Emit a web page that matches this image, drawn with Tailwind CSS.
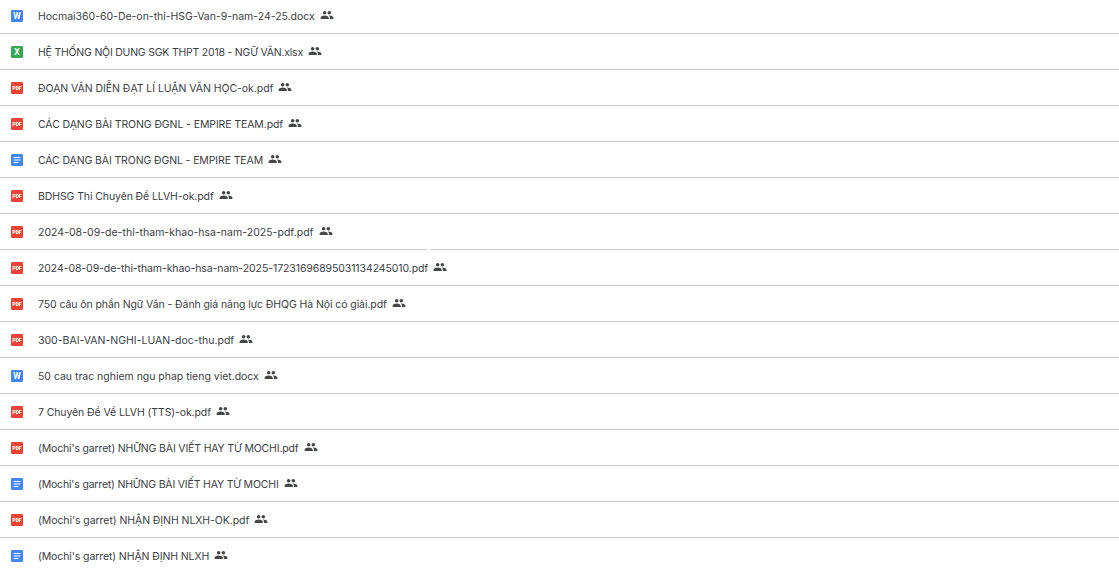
<!doctype html>
<html><head><meta charset="utf-8"><script src="https://cdn.jsdelivr.net/npm/@tailwindcss/browser@4"></script></head>
<body class="bg-white overflow-hidden">
<svg class="hidden"><defs>
<symbol id="w" viewBox="0 0 12 12"><rect width="12" height="12" rx="1.2" fill="#4285f4"/><text x="6" y="9.2" text-anchor="middle" font-size="8.5" font-weight="700" fill="#fff" font-family="Roboto">W</text></symbol>
<symbol id="x" viewBox="0 0 12 12"><rect width="12" height="12" rx="1.2" fill="#34a853"/><text x="6" y="9.2" text-anchor="middle" font-size="8.5" font-weight="700" fill="#fff" font-family="Roboto">X</text></symbol>
<symbol id="p" viewBox="0 0 12 12"><rect width="12" height="12" rx="1.2" fill="#ea4335"/><text x="6" y="7.8" text-anchor="middle" font-size="4.8" font-weight="900" fill="#fff" font-family="Roboto">PDF</text></symbol>
<symbol id="d" viewBox="0 0 12 12"><rect width="12" height="12" rx="1.2" fill="#4285f4"/><path d="M2.6 2.9h6.8v1.2H2.6zM2.6 5.4h6.8v1.2H2.6zM2.6 7.9h4.8v1.2H2.6z" fill="#fff"/></symbol>
<symbol id="s" viewBox="0 0 24 24"><path fill="#444746" d="M16 11c1.66 0 2.99-1.34 2.99-3S17.66 5 16 5s-3 1.34-3 3 1.34 3 3 3zm-8 0c1.66 0 2.99-1.34 2.99-3S9.66 5 8 5 5 6.34 5 8s1.34 3 3 3zm0 2c-2.33 0-7 1.17-7 3.5V19h14v-2.5C15 14.17 10.33 13 8 13zm8 0c-.29 0-.62.02-.97.05 1.16.84 1.97 1.97 1.97 3.45V19h6v-2.5c0-2.33-4.67-3.5-7-3.5z"/></symbol>
</defs></svg>
<main class="-mt-[2px] text-[10.5px] leading-4 text-[#3c4043] font-['Inter',sans-serif]">
<div class="h-9 border-b border-[#c4c7c5] flex items-center pl-[11px]"><svg class="size-3 mr-[15px]"><use href="#w"/></svg><span class="mt-[2px] tracking-[-0.02px]">Hocmai360-60-De-on-thi-HSG-Van-9-nam-24-25.docx</span><svg class="size-3.5 ml-[5px] -mt-[2px]"><use href="#s"/></svg></div>
<div class="h-9 border-b border-[#c4c7c5] flex items-center pl-[11px]"><svg class="size-3 mr-[15px]"><use href="#x"/></svg><span class="mt-[2px] tracking-[-0.22px]">HỆ THỐNG NỘI DUNG SGK THPT 2018 - NGỮ VĂN.xlsx</span><svg class="size-3.5 ml-[5px] -mt-[2px]"><use href="#s"/></svg></div>
<div class="h-9 border-b border-[#c4c7c5] flex items-center pl-[11px]"><svg class="size-3 mr-[15px]"><use href="#p"/></svg><span class="mt-[2px] tracking-[-0.05px]">ĐOẠN VĂN DIỄN ĐẠT LÍ LUẬN VĂN HỌC-ok.pdf</span><svg class="size-3.5 ml-[5px] -mt-[2px]"><use href="#s"/></svg></div>
<div class="h-9 border-b border-[#c4c7c5] flex items-center pl-[11px]"><svg class="size-3 mr-[15px]"><use href="#p"/></svg><span class="mt-[2px] tracking-[-0.1px]">CÁC DẠNG BÀI TRONG ĐGNL - EMPIRE TEAM.pdf</span><svg class="size-3.5 ml-[5px] -mt-[2px]"><use href="#s"/></svg></div>
<div class="h-9 border-b border-[#c4c7c5] flex items-center pl-[11px]"><svg class="size-3 mr-[15px]"><use href="#d"/></svg><span class="mt-[2px] tracking-[-0.12px]">CÁC DẠNG BÀI TRONG ĐGNL - EMPIRE TEAM</span><svg class="size-3.5 ml-[5px] -mt-[2px]"><use href="#s"/></svg></div>
<div class="h-9 border-b border-[#c4c7c5] flex items-center pl-[11px]"><svg class="size-3 mr-[15px]"><use href="#p"/></svg><span class="mt-[2px] tracking-[-0.1px]">BDHSG Thi Chuyên Đề LLVH-ok.pdf</span><svg class="size-3.5 ml-[5px] -mt-[2px]"><use href="#s"/></svg></div>
<div class="relative h-9 border-b border-[#c4c7c5] flex items-center pl-[11px]"><svg class="size-3 mr-[15px]"><use href="#p"/></svg><span class="mt-[2px] tracking-[0.02px]">2024-08-09-de-thi-tham-khao-hsa-nam-2025-pdf.pdf</span><svg class="size-3.5 ml-[5px] -mt-[2px]"><use href="#s"/></svg><div class="absolute left-[427px] -bottom-px w-1 h-px bg-white"></div></div>
<div class="h-9 border-b border-[#c4c7c5] flex items-center pl-[11px]"><svg class="size-3 mr-[15px]"><use href="#p"/></svg><span class="mt-[2px] tracking-[-0.09px]">2024-08-09-de-thi-tham-khao-hsa-nam-2025-17231696895031134245010.pdf</span><svg class="size-3.5 ml-[5px] -mt-[2px]"><use href="#s"/></svg></div>
<div class="h-9 border-b border-[#c4c7c5] flex items-center pl-[11px]"><svg class="size-3 mr-[15px]"><use href="#p"/></svg><span class="mt-[2px] tracking-[-0.09px]">750 câu ôn phần Ngữ Văn - Đánh giá năng lực ĐHQG Hà Nội có giải.pdf</span><svg class="size-3.5 ml-[5px] -mt-[2px]"><use href="#s"/></svg></div>
<div class="h-9 border-b border-[#c4c7c5] flex items-center pl-[11px]"><svg class="size-3 mr-[15px]"><use href="#p"/></svg><span class="mt-[2px]">300-BAI-VAN-NGHI-LUAN-doc-thu.pdf</span><svg class="size-3.5 ml-[5px] -mt-[2px]"><use href="#s"/></svg></div>
<div class="h-9 border-b border-[#c4c7c5] flex items-center pl-[11px]"><svg class="size-3 mr-[15px]"><use href="#w"/></svg><span class="mt-[2px] tracking-[-0.02px]">50 cau trac nghiem ngu phap tieng viet.docx</span><svg class="size-3.5 ml-[5px] -mt-[2px]"><use href="#s"/></svg></div>
<div class="h-9 border-b border-[#c4c7c5] flex items-center pl-[11px]"><svg class="size-3 mr-[15px]"><use href="#p"/></svg><span class="mt-[2px] tracking-[-0.1px]">7 Chuyên Đề Về LLVH (TTS)-ok.pdf</span><svg class="size-3.5 ml-[5px] -mt-[2px]"><use href="#s"/></svg></div>
<div class="h-9 border-b border-[#c4c7c5] flex items-center pl-[11px]"><svg class="size-3 mr-[15px]"><use href="#p"/></svg><span class="mt-[2px] tracking-[-0.16px]">(Mochi's garret) NHỮNG BÀI VIẾT HAY TỪ MOCHI.pdf</span><svg class="size-3.5 ml-[5px] -mt-[2px]"><use href="#s"/></svg></div>
<div class="h-9 border-b border-[#c4c7c5] flex items-center pl-[11px]"><svg class="size-3 mr-[15px]"><use href="#d"/></svg><span class="mt-[2px] tracking-[-0.18px]">(Mochi's garret) NHỮNG BÀI VIẾT HAY TỪ MOCHI</span><svg class="size-3.5 ml-[5px] -mt-[2px]"><use href="#s"/></svg></div>
<div class="h-9 border-b border-[#c4c7c5] flex items-center pl-[11px]"><svg class="size-3 mr-[15px]"><use href="#p"/></svg><span class="mt-[2px] tracking-[-0.07px]">(Mochi's garret) NHẬN ĐỊNH NLXH-OK.pdf</span><svg class="size-3.5 ml-[5px] -mt-[2px]"><use href="#s"/></svg></div>
<div class="h-9 flex items-center pl-[11px]"><svg class="size-3 mr-[15px]"><use href="#d"/></svg><span class="mt-[2px] tracking-[-0.1px]">(Mochi's garret) NHẬN ĐỊNH NLXH</span><svg class="size-3.5 ml-[5px] -mt-[2px]"><use href="#s"/></svg></div>
</main>
</body></html>
